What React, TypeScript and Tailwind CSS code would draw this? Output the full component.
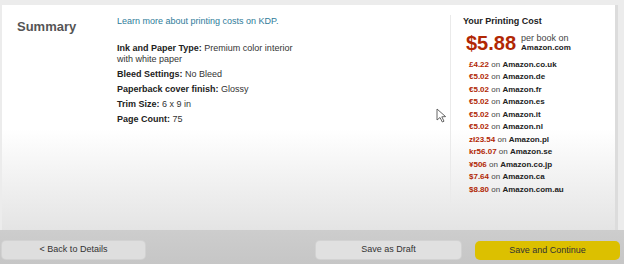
import { Fragment } from 'react';

const markets = [
  { price: '£4.22', site: 'Amazon.co.uk' },
  { price: '€5.02', site: 'Amazon.de' },
  { price: '€5.02', site: 'Amazon.fr' },
  { price: '€5.02', site: 'Amazon.es' },
  { price: '€5.02', site: 'Amazon.it' },
  { price: '€5.02', site: 'Amazon.nl' },
  { price: 'zł23.54', site: 'Amazon.pl' },
  { price: 'kr56.07', site: 'Amazon.se' },
  { price: '¥506', site: 'Amazon.co.jp' },
  { price: '$7.64', site: 'Amazon.ca' },
  { price: '$8.80', site: 'Amazon.com.au' },
];

const details = [
  { label: 'Bleed Settings:', value: 'No Bleed' },
  { label: 'Paperback cover finish:', value: 'Glossy' },
  { label: 'Trim Size:', value: '6 x 9 in' },
  { label: 'Page Count:', value: '75' },
];

function Cursor() {
  return (
    <svg
      className="absolute left-[436px] top-[108px]"
      width="12"
      height="15"
      viewBox="0 0 12 15"
    >
      <path
        d="M1 1 L1 12 L4 9.5 L6.3 14 L8 13.2 L5.8 8.8 L9.6 8.6 Z"
        fill="#fff"
        stroke="#555"
        strokeWidth="0.9"
        strokeLinejoin="round"
      />
    </svg>
  );
}

export default function App() {
  return (
    <div className="relative w-[624px] h-[264px] bg-[#ececec] font-['Liberation_Sans',Arial,sans-serif] text-[9px] text-[#333] overflow-hidden">
      <div className="pt-[5px] pl-[2px] pr-[6px]">
        <div className="flex h-[225px] bg-gradient-to-b from-white from-55% to-[#e4e4e4] border-r-[3px] border-[#dcdcdc]">
          <div className="w-[115px] pl-[15px] pt-[12px]">
            <h2 className="text-[13px] font-bold text-[#555]">Summary</h2>
          </div>

          <div className="w-[333px] pt-[10px]">
            <a className="text-[#2f7c9a]">Learn more about printing costs on KDP.</a>
            <div className="mt-[14px] leading-[11px]">
              <div>
                <span className="font-bold text-[#222]">Ink and Paper Type: </span>
                Premium color interior
              </div>
              <div>with white paper</div>
            </div>
            {details.map((d) => (
              <div key={d.label} className="mt-[4px] leading-[11px]">
                <span className="font-bold text-[#222]">{d.label} </span>
                {d.value}
              </div>
            ))}
          </div>

          <div className="mt-[10px] h-[188px] w-px bg-[#eaeaea]" />

          <div className="pl-[12px] pt-[10px]">
            <div className="font-bold text-[#222]">Your Printing Cost</div>
            <div className="mt-[3px] pl-[3px] flex items-center">
              <span className="text-[20px] font-bold leading-[22px] text-[#b12704]">
                $5.88
              </span>
              <div className="ml-[5px] leading-[10px]">
                <div className="text-[#444]">per book on</div>
                <div className="font-bold text-[8px] text-[#222]">Amazon.com</div>
              </div>
            </div>
            <div className="mt-[6px] pl-[6px] grid gap-y-[2.5px] text-[8px] leading-[10px]">
              {markets.map((m, i) => (
                <Fragment key={i}>
                  <div>
                    <span className="font-bold text-[#b12704]">{m.price}</span>{' '}
                    <span className="text-[#444]">on</span>{' '}
                    <span className="font-bold text-[#222]">{m.site}</span>
                  </div>
                </Fragment>
              ))}
            </div>
          </div>
        </div>
      </div>

      <div className="flex items-start h-[34px] pt-[11px] bg-gradient-to-b from-[#cdcdcd] to-[#c6c6c6] px-[2px] text-[9px] text-[#333]">
        <button className="w-[143px] h-[18px] rounded-[4px] bg-[#dedede] shadow-[0_0_0_1px_#d2d2d2]">
          &lt; Back to Details
        </button>
        <div className="flex-1" />
        <button className="w-[145px] h-[18px] rounded-[4px] bg-[#e0e0e0] shadow-[0_0_0_1px_#d2d2d2]">
          Save as Draft
        </button>
        <button className="ml-[14px] mr-[2px] w-[145px] h-[19px] rounded-[5px] bg-[#dcc000]">
          Save and Continue
        </button>
      </div>

      <Cursor />
    </div>
  );
}
